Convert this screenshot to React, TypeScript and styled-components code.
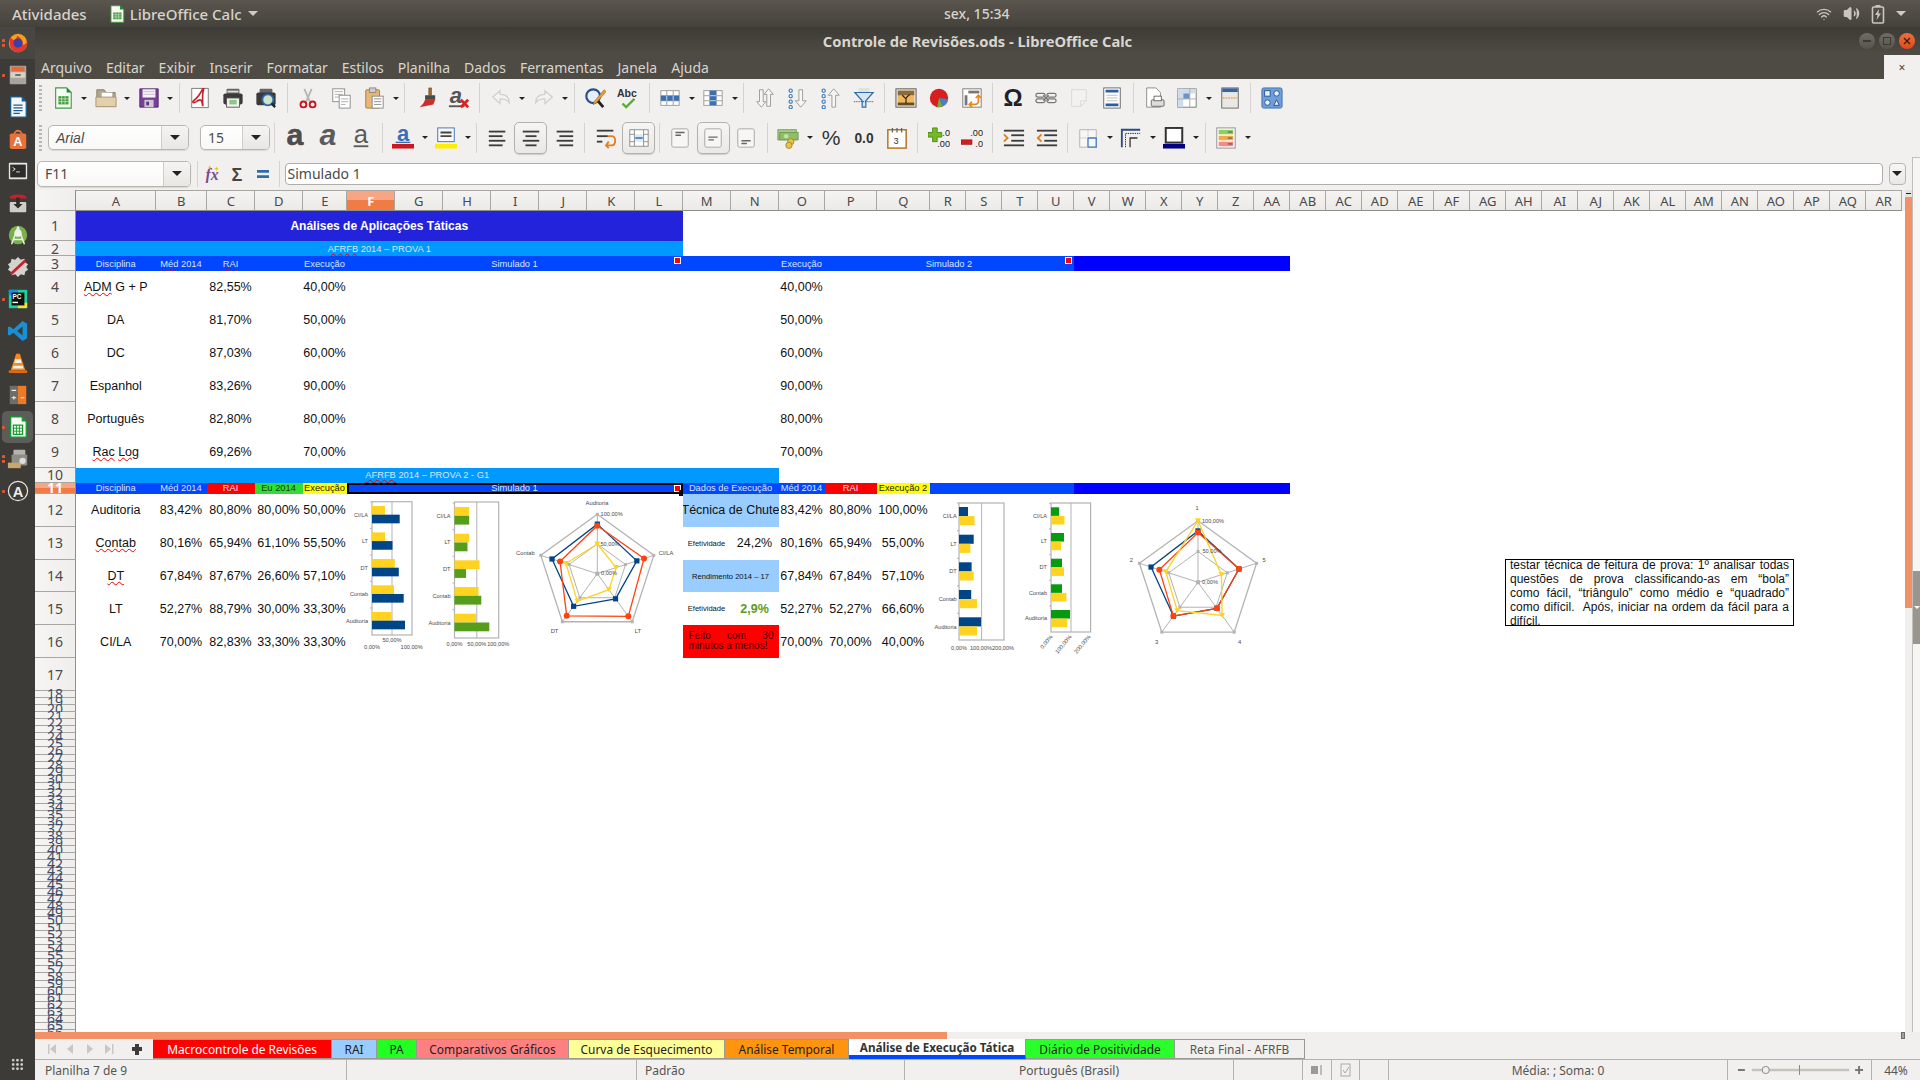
import * as React from "react";
import styled, { createGlobalStyle } from "styled-components";
import { Volume2, Wifi } from "lucide-react";

const GlobalStyle = createGlobalStyle`
    html, body { margin: 0; padding: 0; background: #fff; overflow: hidden; }
    * { box-sizing: border-box; }
`;

const UI_FONT = `"Noto Sans", "DejaVu Sans", sans-serif`;
const CELL_FONT = `"Liberation Sans", Arial, sans-serif`;

// ---- shell ----
const Screen = styled.div`
    width: 1920px;
    height: 1080px;
    display: flex;
    flex-direction: column;
    overflow: hidden;
    font-family: ${UI_FONT};
`;
const TopBar = styled.div`
    height: 27px;
    flex: none;
    display: grid;
    grid-template-columns: 944px auto 1fr;
    align-items: center;
    background: linear-gradient(#5a564e, #45423c);
    color: #d6d3cc;
    font-size: 14px;
    font-weight: 500;
`;
const TopLeft = styled.div`
    display: flex;
    align-items: center;
    padding-left: 12px;
    font-size: 15px;
`;
const TopApp = styled.div`
    display: flex;
    align-items: center;
    gap: 4px;
    margin-left: 21px;
`;
const Caret = styled.span<{ $size?: number; $color?: string }>`
    display: inline-block;
    width: 0;
    height: 0;
    border-left: ${p => p.$size ?? 5}px solid transparent;
    border-right: ${p => p.$size ?? 5}px solid transparent;
    border-top: ${p => p.$size ?? 5}px solid ${p => p.$color ?? "#cfccc5"};
`;
const TopCaret = styled(Caret)`
    margin-left: 2px;
`;
const TopTray = styled.div`
    display: flex;
    align-items: center;
    justify-content: flex-end;
    gap: 11px;
    padding-right: 14px;
    color: #c9c6bf;
`;
const Body = styled.div`
    flex: 1;
    display: flex;
    min-height: 0;
`;
const Launcher = styled.div`
    width: 35px;
    flex: none;
    display: flex;
    flex-direction: column;
    background: #3c3b37;
    position: relative;
`;
const LauncherItem = styled.div<{ $active?: boolean; $dots?: number }>`
    height: 32px;
    flex: none;
    display: flex;
    align-items: center;
    justify-content: center;
    position: relative;
    &:first-child { background: rgba(255,255,255,0.06); }
    &::before {
        content: "";
        position: absolute;
        left: 2px;
        right: 2px;
        top: 0;
        bottom: 0;
        border-radius: 5px;
        background: ${p => (p.$active ? "rgba(255,255,255,0.17)" : "transparent")};
    }
    &::after {
        content: "";
        position: absolute;
        left: 2px;
        top: ${p => (p.$dots === 2 ? 12 : 15)}px;
        width: 3px;
        height: ${p => (p.$dots === 2 ? 8 : 3)}px;
        display: ${p => (p.$dots ? "block" : "none")};
        background: ${p => (p.$dots === 2 ? "repeating-linear-gradient(#e2572b 0 3px, transparent 3px 5px)" : "#e2572b")};
        border-radius: 1px;
    }
    svg { position: relative; }
`;
const AppGrid = styled.div`
    position: absolute;
    left: 11px;
    bottom: 9px;
    width: 13px;
    height: 13px;
    background: radial-gradient(circle, #d8d6d0 1.1px, transparent 1.4px) 0 0 / 4.3px 4.3px;
`;
const Window = styled.div`
    flex: 1;
    min-width: 0;
    display: flex;
    flex-direction: column;
`;
const TitleBar = styled.div`
    height: 27px;
    flex: none;
    display: flex;
    align-items: center;
    justify-content: center;
    position: relative;
    background: linear-gradient(#3c3a35, #4f4c44);
    color: #d9d6cf;
    font-size: 14.7px;
    font-weight: 700;
`;
const WindowButtons = styled.div`
    position: absolute;
    right: 5px;
    top: 6px;
    display: flex;
    gap: 4px;
`;
const WindowButton = styled.div<{ $close?: boolean }>`
    width: 16px;
    height: 16px;
    border-radius: 50%;
    display: flex;
    align-items: center;
    justify-content: center;
    background: ${p => (p.$close ? "linear-gradient(#f0703c, #e0481a)" : "linear-gradient(#706d66, #56534c)")};
`;
const MenuBar = styled.div`
    height: 25px;
    flex: none;
    display: flex;
    align-items: center;
    gap: 14px;
    padding: 2px 0 0 6px;
    position: relative;
    background: #4e4b44;
    color: #d8d5cd;
    font-size: 14px;
`;
const DocClose = styled.div`
    position: absolute;
    right: 0;
    top: 1px;
    bottom: 0;
    width: 36px;
    background: #f1f0ee;
    color: #444;
    font-size: 12px;
    display: flex;
    align-items: center;
    justify-content: center;
`;

// ---- toolbars ----
const Toolbar = styled.div<{ $h: number }>`
    height: ${p => p.$h}px;
    flex: none;
    display: flex;
    align-items: center;
    position: relative;
    background: #f1f0ee;
    padding: 0 0 1px 2px;
`;
const Grip = styled.div`
    width: 3px;
    height: 26px;
    margin: 0 4px 0 2px;
    background: repeating-linear-gradient(#b8b6b1 0 2px, transparent 2px 4px);
    flex: none;
`;
const Tool = styled.div<{ $active?: boolean }>`
    width: 33px;
    height: 32px;
    flex: none;
    display: flex;
    align-items: center;
    justify-content: center;
    border-radius: 5px;
    border: 1px solid ${p => (p.$active ? "#b4b2ad" : "transparent")};
    background: ${p => (p.$active ? "linear-gradient(#f6f5f3, #e9e8e5)" : "transparent")};
    box-shadow: ${p => (p.$active ? "0 1px 1px rgba(0,0,0,0.15)" : "none")};
`;
const ToolArrow = styled.div`
    width: 10px;
    flex: none;
    display: flex;
    justify-content: center;
`;
const ToolSep = styled.div`
    width: 1px;
    height: 30px;
    margin: 0 3.875px;
    flex: none;
    background: #d5d3cf;
`;
const Combo = styled.div<{ $w: number; $ml: number; $h?: number }>`
    width: ${p => p.$w}px;
    height: ${p => p.$h ?? 25}px;
    margin-left: ${p => p.$ml}px;
    flex: none;
    display: flex;
    border: 1px solid #b8b6b1;
    border-radius: 5px;
    overflow: hidden;
    background: linear-gradient(#fff, #f8f8f7);
    box-shadow: 0 1px 1px rgba(0,0,0,0.1);
`;
const ComboText = styled.div<{ $italic?: boolean }>`
    flex: 1;
    display: flex;
    align-items: center;
    padding-left: 7px;
    color: #4c4c4c;
    font-family: ${p => (p.$italic ? CELL_FONT : UI_FONT)};
    font-style: ${p => (p.$italic ? "italic" : "normal")};
    font-size: 14px;
`;
const ComboDrop = styled.div`
    width: 27px;
    flex: none;
    display: flex;
    align-items: center;
    justify-content: center;
    border-left: 1px solid #cfcdc8;
    background: linear-gradient(#f5f4f2, #e8e7e4);
`;
const FormulaSep = styled.div<{ $ml: number }>`
    width: 1px;
    height: 26px;
    margin-left: ${p => p.$ml}px;
    flex: none;
    background: #d5d3cf;
`;
const FormulaTool = styled.div<{ $w: number }>`
    width: ${p => p.$w}px;
    flex: none;
    display: flex;
    justify-content: center;
`;
const FormulaInput = styled.div`
    width: 1598.5px;
    height: 22px;
    margin-left: 4.5px;
    flex: none;
    display: flex;
    align-items: center;
    padding-left: 2px;
    border: 1px solid #b0aeaa;
    border-radius: 4px;
    background: #fff;
    color: #4a4a4a;
    font-size: 14px;
`;
const FormulaDrop = styled.div`
    width: 17px;
    height: 22px;
    margin-left: 5.5px;
    flex: none;
    display: flex;
    align-items: center;
    justify-content: center;
    border: 1px solid #b8b6b1;
    border-radius: 4px;
    background: linear-gradient(#f7f6f5, #e9e8e5);
`;
const DeckCap = styled.div`
    position: absolute;
    right: 0;
    top: -1px;
    bottom: 0;
    width: 8px;
    border-left: 1px solid #c2c0bb;
    border-top: 1px solid #c2c0bb;
    background: #f7f6f5;
`;

// ---- sheet ----
const SheetRow = styled.div`
    height: 842px;
    flex: none;
    display: flex;
`;
const Sheet = styled.div`
    flex: 1;
    min-width: 0;
    position: relative;
    overflow: hidden;
    background: #fff;
`;
const VScroll = styled.div`
    width: 7px;
    flex: none;
    background: #f0efed;
`;
const VSplit = styled.div`
    height: 7px;
    display: flex;
    align-items: center;
    justify-content: center;
    background: #e4e3e0;
    &::after {
        content: "";
        width: 5px;
        height: 1px;
        background: #222;
    }
`;
const VThumb = styled.div`
    height: 411px;
    background: #f29068;
`;
const Deck = styled.div`
    width: 8px;
    flex: none;
    background: #f7f6f5;
    border-left: 1px solid #c2c0bb;
    padding-top: 381px;
`;
const DeckGrip = styled.div`
    height: 73px;
    background: #9a968f;
    display: flex;
    align-items: center;
    justify-content: center;
`;
const Grid = styled.div<{ $cols: string; $rows: string }>`
    display: grid;
    grid-template-columns: ${p => p.$cols};
    grid-template-rows: ${p => p.$rows};
    width: 100%;
    height: 100%;
    font-family: ${CELL_FONT};
    color: #111;
`;
const ColHead = styled.div<{ $col: number; $sel?: boolean }>`
    grid-column: ${p => p.$col};
    grid-row: 1;
    display: flex;
    align-items: center;
    justify-content: center;
    padding-left: 1.5px;
    font-family: ${UI_FONT};
    font-size: 13px;
    font-weight: ${p => (p.$sel ? 700 : 400)};
    color: ${p => (p.$sel ? "#fff" : "#4a4a4a")};
    background: ${p => (p.$sel
        ? "linear-gradient(#f6a684 0 50%, #f07b45 50%)"
        : "linear-gradient(#f5f4f2, #ebeae7)")};
    border-top: 1px solid #a8a6a1;
    border-right: 1px solid #a8a6a1;
    border-bottom: 1px solid #8f8d88;
    overflow: hidden;
`;
const RowHead = styled.div<{ $row: number; $sel?: boolean; $tight?: boolean }>`
    grid-column: 1;
    grid-row: ${p => p.$row};
    display: flex;
    align-items: center;
    justify-content: center;
    position: relative;
    font-family: ${UI_FONT};
    font-size: 14px;
    font-weight: ${p => (p.$sel ? 700 : 400)};
    color: ${p => (p.$sel ? "#fff" : p.$tight ? "#3d4f6a" : "#4a4a4a")};
    line-height: ${p => (p.$tight ? "7px" : "normal")};
    background: ${p => (p.$sel
        ? "linear-gradient(#f6a684 0 50%, #f07b45 50%)"
        : "linear-gradient(90deg, #f6f5f3, #efeeec)")};
    border-right: 1px solid #8f8d88;
    border-bottom: 1px solid #a8a6a1;
`;
const Cell = styled.div<{
    $c: number; $span?: number; $r: number; $bg?: string; $fg?: string;
    $size?: number; $bold?: boolean; $noClip?: boolean;
}>`
    grid-column: ${p => p.$c} / span ${p => p.$span ?? 1};
    grid-row: ${p => p.$r};
    display: flex;
    align-items: center;
    justify-content: center;
    position: relative;
    white-space: nowrap;
    overflow: ${p => (p.$noClip ? "visible" : "hidden")};
    background: ${p => p.$bg ?? "transparent"};
    color: ${p => p.$fg ?? "#111"};
    font-size: ${p => p.$size ?? 12.5}px;
    font-weight: ${p => (p.$bold ? 700 : 400)};
`;
const SelectedBand = styled(Cell)`
    border: 2px solid #000;
    &::after {
        content: "";
        position: absolute;
        right: -4px;
        bottom: -4px;
        width: 6px;
        height: 6px;
        background: #000;
    }
`;
const NoteCell = styled(Cell)`
    white-space: normal;
    text-align: justify;
    text-align-last: left;
    display: block;
    padding: 6px 5px 0 6px;
    line-height: 10px;
    font-size: 10px;
`;
const FillHeader = styled.div`
    grid-column: -2;
    grid-row: 1;
    background: #f0efed;
`;
const Spell = styled.span`
    text-decoration: underline wavy #ee0000 1px;
    text-underline-offset: 1px;
`;
const Mark = styled.span<{ $inset?: number; $top?: number }>`
    position: absolute;
    right: ${p => p.$inset ?? 1.5}px;
    top: ${p => p.$top ?? 1}px;
    width: 7px;
    height: 7px;
    background: #f00;
    border: 1px solid #fff;
`;
const TextNote = styled.div`
    position: absolute;
    left: 1470px;
    top: 369px;
    width: 289px;
    height: 66.5px;
    border: 1.5px solid #000;
    overflow: hidden;
    padding: 0 4px;
    background: #fff;
    font-family: ${CELL_FONT};
    font-size: 12px;
    line-height: 14px;
    color: #111;
`;
const TextNoteBody = styled.div`
    margin-top: -2px;
`;
const NoteLine = styled.div<{ $last?: boolean }>`
    text-align: justify;
    text-align-last: ${p => (p.$last ? "left" : "justify")};
`;
const FloatChart = styled.svg<{ $x: number; $y: number }>`
    position: absolute;
    left: ${p => p.$x - 35}px;
    top: ${p => p.$y - 190}px;
    font-family: ${CELL_FONT};
`;

// ---- bottom ----
const HScroll = styled.div`
    height: 7px;
    flex: none;
    background: #f0efed;
    display: flex;
`;
const HThumb = styled.div`
    width: 912px;
    background: #f29068;
`;
const HGrip = styled.div`
    width: 4px;
    margin: 0 15px 0 auto;
    background: #a3a19c;
    border: 1px solid #6f6d68;
`;
const TabBar = styled.div`
    height: 21px;
    flex: none;
    display: flex;
    align-items: stretch;
    background: #f1f0ee;
    border-bottom: 1px solid #b5b3ae;
`;
const TabNav = styled.div`
    width: 118px;
    flex: none;
    display: flex;
    align-items: center;
`;
const Tab = styled.div<{ $w: number; $bg: string; $fg: string; $active?: boolean }>`
    width: ${p => p.$w}px;
    flex: none;
    display: flex;
    align-items: center;
    justify-content: center;
    padding-bottom: 1px;
    white-space: nowrap;
    font-size: ${p => (p.$active ? 11.7 : 11.9)}px;
    font-weight: ${p => (p.$active ? 700 : 400)};
    background: ${p => p.$bg};
    color: ${p => p.$fg};
    border: 1px solid #9a9893;
    border-left: none;
    border-top-width: ${p => (p.$active ? 0 : 1)}px;
    border-bottom: ${p => (p.$active ? "4px solid #0047ff" : "1px solid #9a9893")};
`;
const StatusBar = styled.div`
    height: 20px;
    flex: none;
    display: grid;
    grid-template-columns: 312px 290px 268px 329px 69px 29px 28px 29px 339px 144px 1fr;
    background: #f1f0ee;
    color: #555;
    font-size: 12px;
`;
const StatusCell = styled.div<{ $center?: boolean; $pad?: number }>`
    display: flex;
    align-items: center;
    justify-content: ${p => (p.$center ? "center" : "flex-start")};
    padding-left: ${p => (p.$center ? 0 : p.$pad ?? 8)}px;
    border-right: 1px solid #b5b3ae;
    white-space: nowrap;
    overflow: hidden;
    &:last-child { border-right: none; }
`;

// ---- small drawings ----
const Ic: React.FC<{ s?: number; children: React.ReactNode }> = ({ s = 24, children }) => (
    <svg width={s} height={s} viewBox="0 0 24 24">{children}</svg>
);

const bars = (x: number, ys: number[], w: number, c = "#3c3c3c", h = 2) =>
    ys.map((y, i) => <rect key={i} x={x} y={y} width={i % 2 ? w - 3 : w} height={h} fill={c} />);

const table = (
    <g>
        <rect x="2" y="4" width="20" height="16" fill="#fff" stroke="#999" />
        <path d="M2 9.5h20M2 15h20M8.5 4v16M15.5 4v16" stroke="#999" />
    </g>
);

const icons: Record<string, React.ReactNode> = {
    newDoc: <g>
        <path d="M4 1h12l5 5v17H4z" fill="#f7fbf4" stroke="#3f9a3f" strokeWidth="1.2" />
        <path d="M16 1l5 5h-5z" fill="#168a2e" />
        <rect x="7" y="10" width="11" height="9" fill="#3c9c3c" />
        <path d="M7 13h11M7 16h11M10.6 10v9M14.3 10v9" stroke="#d8f0d0" strokeWidth=".8" />
    </g>,
    open: <g>
        <path d="M2 3h8l2 3h10v15H2z" fill="#b5a688" stroke="#8a7c62" />
        <rect x="7" y="6" width="12" height="7" fill="#fff" stroke="#aaa" strokeWidth=".6" />
        <path d="M1 11h22v10.5H1z" fill="#e2d0ad" stroke="#a8946f" />
    </g>,
    save: <g>
        <path d="M2 2h20v20H2z" fill="#7a3f97" stroke="#50236a" />
        <rect x="5" y="2.5" width="14" height="9" fill="#f5f3f7" />
        <path d="M6 5h12M6 8h12" stroke="#c8b9d1" />
        <rect x="7" y="14" width="10" height="8" fill="#cfc6d6" />
        <rect x="9" y="16" width="3" height="4" fill="#5c3a72" />
    </g>,
    pdf: <g>
        <rect x="3" y="1.5" width="18" height="21" fill="#fff" stroke="#777" />
        <path d="M15 2C12 8 9 12 5 15c-2 2 0 3 3 1 5-4 6-2 7 5 0-6-1-12 1-19z" fill="none" stroke="#c8202a" strokeWidth="1.8" />
    </g>,
    print: <g>
        <rect x="5" y="2" width="14" height="7" rx="1" fill="#666" />
        <rect x="1.5" y="7" width="21" height="12" rx="2" fill="#3a3a3a" />
        <rect x="5" y="12" width="14" height="10" fill="#f4f4f2" stroke="#555" />
        <rect x="8" y="14" width="8" height="5" fill="#8cc48a" />
        <rect x="6" y="4" width="12" height="2" fill="#ddd" />
    </g>,
    preview: <g>
        <rect x="5" y="2" width="14" height="7" rx="1" fill="#666" />
        <rect x="1.5" y="6" width="21" height="14" rx="2" fill="#3a3a3a" />
        <circle cx="14" cy="14" r="6" fill="#cfe2d0" stroke="#2d6aa8" strokeWidth="2" />
        <path d="M18 18l4 4" stroke="#222" strokeWidth="2.5" />
    </g>,
    cut: <g>
        <path d="M8 2l6 14M16 2l-6 14" stroke="#b8b6b1" strokeWidth="2" />
        <circle cx="7" cy="19" r="3.2" fill="none" stroke="#c8141e" strokeWidth="2" />
        <circle cx="17" cy="19" r="3.2" fill="none" stroke="#c8141e" strokeWidth="2" />
    </g>,
    copy: <g>
        <rect x="3" y="2" width="13" height="14" fill="#fff" stroke="#8a8a8a" />
        <path d="M5 5h9M5 8h9M5 11h6" stroke="#aaa" />
        <rect x="10" y="9" width="12" height="14" fill="#fff" stroke="#8a8a8a" />
        <path d="M12 13h8M12 16h8M12 19h5" stroke="#aaa" />
    </g>,
    paste: <g>
        <rect x="3" y="3" width="15" height="20" rx="1" fill="#e8b775" stroke="#a77a3a" />
        <rect x="7" y="1" width="7" height="5" fill="#ccc" stroke="#888" />
        <rect x="10" y="10" width="12" height="13" fill="#fff" stroke="#888" />
        <path d="M12 13h8M12 16h8M12 19h8" stroke="#888" />
    </g>,
    brush: <g>
        <path d="M15 1h3v8h-3z" fill="#9d6b2f" stroke="#6e4a1e" strokeWidth=".6" />
        <path d="M11 9h11v5H11z" fill="#4a4a4a" />
        <path d="M11 14h11l-2 5-15 3c3-2 5-5 6-8z" fill="#cf2c2c" />
    </g>,
    clear: <g>
        <text x="2" y="17" fontSize="24" fontStyle="italic" fontWeight="700" fontFamily="Liberation Sans" fill="#555">a</text>
        <rect x="1" y="20" width="17" height="2" fill="#555" />
        <path d="M14 14l8 8M22 14l-8 8" stroke="#dd2222" strokeWidth="3" />
    </g>,
    undo: <path d="M3 11l8-7v4c6 0 10 3 10 9-2-3-5-4-10-4v5z" fill="#f4f3f1" stroke="#d2d0cc" strokeWidth="1.4" />,
    redo: <path d="M21 11l-8-7v4c-6 0-10 3-10 9 2-3 5-4 10-4v5z" fill="#f4f3f1" stroke="#d2d0cc" strokeWidth="1.4" />,
    find: <g>
        <circle cx="10" cy="10" r="7.5" fill="#e8eef7" stroke="#274f8e" strokeWidth="2.4" />
        <path d="M15 15l6 7" stroke="#222" strokeWidth="3" />
        <path d="M22 3L11 16l-1 3 3-1L24 5z" fill="#e89b3c" stroke="#8a5a1e" strokeWidth=".6" />
    </g>,
    spell: <g>
        <text x="0" y="11" fontSize="11.5" fontWeight="700" fontFamily="Liberation Sans" fill="#333">Abc</text>
        <path d="M6 18l4 4 9-9" fill="none" stroke="#58b030" strokeWidth="2.6" />
    </g>,
    rows: <g>
        {table}
        <rect x="2" y="9.5" width="20" height="5.5" fill="#3d6fb0" />
        <path d="M8.5 9.5v5.5M15.5 9.5v5.5" stroke="#cfe0f5" />
    </g>,
    cols: <g>
        {table}
        <rect x="8.5" y="4" width="7" height="16" fill="#3d6fb0" />
        <path d="M8.5 9.5h7M8.5 15h7" stroke="#cfe0f5" />
    </g>,
    sort: <g fill="#f7f6f4" stroke="#9a9893">
        <path d="M8 22l-5-6h3V3h4v13h3z" />
        <path d="M16 2l5 6h-3v13h-4V8h-3z" />
    </g>,
    sortAsc: <g>
        <g fill="none" stroke="#3b78b8" strokeWidth="1.2"><circle cx="4" cy="4" r="1.8" /><circle cx="4" cy="10" r="1.8" /><circle cx="4" cy="16" r="1.8" /><circle cx="4" cy="22" r="1.8" /></g>
        <path d="M15 22l-6-7h4V3h4v12h4z" fill="#f7f6f4" stroke="#9a9893" />
    </g>,
    sortDesc: <g>
        <g fill="none" stroke="#3b78b8" strokeWidth="1.2"><circle cx="4" cy="4" r="1.8" /><circle cx="4" cy="10" r="1.8" /><circle cx="4" cy="16" r="1.8" /><circle cx="4" cy="22" r="1.8" /></g>
        <path d="M15 2l6 7h-4v13h-4V9H9z" fill="#f7f6f4" stroke="#9a9893" />
    </g>,
    filter: <g>
        <path d="M6 1h12v5H6z" fill="#d8d8d4" opacity=".6" />
        <path d="M2 6h20l-8 9v7h-4v-7z" fill="#d6e6f5" stroke="#2f6ca8" strokeWidth="1.3" />
        <path d="M1 16h22" stroke="#333" strokeDasharray="1 1" />
    </g>,
    image: <g>
        <rect x="1" y="2" width="22" height="20" fill="#e4e3e0" stroke="#555" />
        <rect x="3" y="4" width="18" height="16" fill="#f0b860" />
        <rect x="3" y="4" width="18" height="5" fill="#8a6a40" />
        <rect x="3" y="17" width="18" height="3" fill="#6a4a24" />
        <path d="M12 18v-6M12 13l-4-4M12 12l4-4" stroke="#2a1a10" strokeWidth="1.2" />
    </g>,
    chart: <g>
        <circle cx="12" cy="12" r="10" fill="#d81e1e" />
        <path d="M12 12L22 13a10 10 0 0 1-6 8z" fill="#4a7fc0" />
        <path d="M12 12l4 9a10 10 0 0 1-6 1z" fill="#6fb040" />
    </g>,
    pivot: <g>
        <rect x="2" y="2" width="20" height="20" fill="#fff" stroke="#777" />
        <rect x="8" y="4" width="12" height="3" fill="#777" />
        <rect x="4" y="9" width="3" height="11" fill="#777" />
        <path d="M10 19h5q4 0 4-4v-5M16 12l3-3 3 3M12 16l-3 3 3 3" fill="none" stroke="#e08a20" strokeWidth="1.8" />
    </g>,
    omega: <text x="12" y="21" textAnchor="middle" fontSize="26" fontWeight="700" fontFamily="Liberation Sans" fill="#222">Ω</text>,
    link: <g fill="none" stroke="#777" strokeWidth="1.4">
        <rect x="1" y="7" width="10" height="4" rx="2" /><rect x="13" y="13" width="10" height="4" rx="2" />
        <rect x="13" y="7" width="10" height="4" rx="2" /><rect x="1" y="13" width="10" height="4" rx="2" />
        <path d="M9 9l6 6M15 9l-6 6" />
    </g>,
    note: <path d="M4 3h16v12l-6 6H4zM14 21v-6h6" fill="#f3f2f0" stroke="#dad8d4" />,
    header: <g>
        <rect x="3" y="1" width="18" height="22" fill="#fff" stroke="#666" />
        <rect x="5" y="3" width="14" height="3" fill="#2a5ca0" />
        <path d="M6 9h12M6 12h12M6 15h12" stroke="#bbb" />
        <rect x="5" y="18" width="14" height="3" fill="#2a5ca0" />
    </g>,
    printArea: <g>
        <path d="M4 1h10l5 5v16H4z" fill="#fff" stroke="#888" />
        <rect x="9" y="14" width="14" height="7" rx="1" fill="#ddd" stroke="#666" />
        <rect x="12" y="10" width="8" height="5" fill="#fff" stroke="#666" />
    </g>,
    freeze: <g>
        <rect x="2" y="2" width="20" height="20" fill="#fff" stroke="#777" />
        <rect x="2" y="2" width="20" height="5" fill="#cfdcec" />
        <rect x="2" y="2" width="6" height="20" fill="#cfdcec" />
        <rect x="8" y="7" width="7" height="6" fill="#6a96c8" />
        <path d="M15 2v20M2 13h20" stroke="#aaa" />
    </g>,
    split: <g>
        <rect x="3" y="1" width="18" height="22" fill="#e8e8e6" stroke="#666" />
        <rect x="3.5" y="1.5" width="17" height="4" fill="#3a64a0" />
        <path d="M4 12h16" stroke="#e88a10" strokeDasharray="2 1" strokeWidth="1.2" />
    </g>,
    shapes: <g>
        <rect x="1" y="1" width="22" height="22" rx="2" fill="#6f9ed8" stroke="#3d6fb0" />
        <rect x="4" y="4" width="6" height="6" fill="#e8f0fa" stroke="#23508c" />
        <circle cx="17" cy="7" r="3" fill="#e8f0fa" stroke="#23508c" />
        <circle cx="7" cy="17" r="3" fill="#e8f0fa" stroke="#23508c" />
        <path d="M14 20l3-6 3 6z" fill="#e8f0fa" stroke="#23508c" />
    </g>,
    bold: <text x="12" y="20" textAnchor="middle" fontSize="33" fontWeight="700" fontFamily="Liberation Sans" fill="#4d4d4d" stroke="#4d4d4d" strokeWidth=".6">a</text>,
    italic: <text x="12" y="20" textAnchor="middle" fontSize="33" fontStyle="italic" fontWeight="700" fontFamily="Liberation Sans" fill="#5a5a5a">a</text>,
    underline: <g>
        <text x="12" y="17" textAnchor="middle" fontSize="28" fontFamily="Liberation Sans" fill="#5a5a5a">a</text>
        <rect x="4" y="20" width="16" height="2" fill="#5a5a5a" />
    </g>,
    fontColor: <g>
        <text x="12" y="15" textAnchor="middle" fontSize="24" fontWeight="700" fontFamily="Liberation Sans" fill="#3a6fb5">a</text>
        <rect x="4" y="16" width="16" height="1.5" fill="#3a6fb5" />
        <rect x="0" y="18.5" width="24" height="5" fill="#c9191c" />
    </g>,
    highlight: <g>
        <rect x="3" y="1" width="18" height="15" fill="#f8f8f8" stroke="#3a6fb5" />
        <path d="M6 6h12M6 10h12" stroke="#444" strokeWidth="2" />
        <rect x="0" y="18.5" width="24" height="5" fill="#ffee00" />
    </g>,
    alignLeft: <g>{bars(2, [4, 9, 14, 19], 18)}</g>,
    alignCenter: <g>
        <rect x="3" y="4" width="18" height="2" fill="#3c3c3c" /><rect x="6" y="9" width="12" height="2" fill="#3c3c3c" />
        <rect x="3" y="14" width="18" height="2" fill="#3c3c3c" /><rect x="6" y="19" width="12" height="2" fill="#3c3c3c" />
    </g>,
    alignRight: <g>
        <rect x="4" y="4" width="18" height="2" fill="#3c3c3c" /><rect x="7" y="9" width="15" height="2" fill="#3c3c3c" />
        <rect x="4" y="14" width="18" height="2" fill="#3c3c3c" /><rect x="7" y="19" width="15" height="2" fill="#3c3c3c" />
    </g>,
    wrap: <g>
        <rect x="2" y="3" width="18" height="2" fill="#3c3c3c" /><rect x="2" y="9" width="12" height="2" fill="#3c3c3c" />
        <rect x="2" y="15" width="6" height="2" fill="#3c3c3c" />
        <path d="M14 10h4q4 0 4 5t-4 5h-5M15 16l-3 4 3 3" fill="none" stroke="#e08020" strokeWidth="2" />
    </g>,
    merge: <g>
        <rect x="2" y="3" width="20" height="18" fill="#fff" stroke="#8a8a8a" />
        <rect x="7" y="8" width="10" height="8" fill="#dbe8f6" />
        <path d="M2 8h5M17 8h5M2 16h5M17 16h5M7 3v18M17 3v18" stroke="#8a8a8a" />
        <path d="M8 12h8" stroke="#2f6ca8" strokeWidth="1.6" />
    </g>,
    vTop: <g>
        <rect x="3" y="2" width="18" height="20" rx="2" fill="#f7f6f4" stroke="#a5a39e" />
        <path d="M7 6h10M7 9h6" stroke="#666" strokeWidth="1.4" />
    </g>,
    vMid: <g>
        <rect x="3" y="2" width="18" height="20" rx="2" fill="#f7f6f4" stroke="#a5a39e" />
        <path d="M7 11h10M7 14h6" stroke="#666" strokeWidth="1.4" />
    </g>,
    vBot: <g>
        <rect x="3" y="2" width="18" height="20" rx="2" fill="#f7f6f4" stroke="#a5a39e" />
        <path d="M7 15h10M7 18h6" stroke="#666" strokeWidth="1.4" />
    </g>,
    money: <g>
        <rect x="1" y="3" width="20" height="11" fill="#a6cf82" stroke="#6f9a50" />
        <rect x="3" y="6" width="20" height="8" fill="#8fbd6b" stroke="#6f9a50" />
        <circle cx="10" cy="10" r="2.5" fill="#c2e0a8" />
        <circle cx="15" cy="16" r="3.4" fill="#e6c24a" stroke="#a88a20" />
        <circle cx="13" cy="20" r="3.4" fill="#e6c24a" stroke="#a88a20" />
    </g>,
    percent: <text x="12" y="20" textAnchor="middle" fontSize="23" fontFamily="Liberation Sans" fill="#333">%</text>,
    number: <text x="12" y="17" textAnchor="middle" fontSize="15" fontWeight="700" fontFamily="Liberation Sans" fill="#333">0.0</text>,
    date: <g>
        <rect x="2" y="3" width="20" height="20" fill="#fff" stroke="#b5731f" strokeWidth="1.6" />
        <path d="M7 1v5M12 1v5M17 1v5" stroke="#666" strokeWidth="1.4" />
        <text x="11" y="18" textAnchor="middle" fontSize="10" fontFamily="Liberation Sans" fill="#333">3</text>
    </g>,
    addDec: <g>
        <path d="M5 1h5v5h5v5h-5v5H5v-5H0V6h5z" fill="#74b82c" stroke="#4c8a12" />
        <text x="24" y="10" textAnchor="end" fontSize="10" fontFamily="Liberation Sans" fill="#222">.0</text>
        <text x="24" y="22" textAnchor="end" fontSize="10" fontFamily="Liberation Sans" fill="#222">.00</text>
    </g>,
    delDec: <g>
        <rect x="0" y="14" width="12" height="5" fill="#d02020" stroke="#901010" strokeWidth=".6" />
        <text x="24" y="10" textAnchor="end" fontSize="10" fontFamily="Liberation Sans" fill="#222">.00</text>
        <text x="24" y="22" textAnchor="end" fontSize="10" fontFamily="Liberation Sans" fill="#222">.0</text>
    </g>,
    indent: <g>
        <rect x="1" y="3" width="22" height="2" fill="#3c3c3c" /><rect x="9" y="8" width="14" height="2" fill="#3c3c3c" />
        <rect x="9" y="14" width="14" height="2" fill="#3c3c3c" /><rect x="1" y="19" width="22" height="2" fill="#3c3c3c" />
        <path d="M1 8l4 4-4 4" fill="none" stroke="#e08020" strokeWidth="2" />
    </g>,
    outdent: <g>
        <rect x="1" y="3" width="22" height="2" fill="#3c3c3c" /><rect x="9" y="8" width="14" height="2" fill="#3c3c3c" />
        <rect x="9" y="14" width="14" height="2" fill="#3c3c3c" /><rect x="1" y="19" width="22" height="2" fill="#3c3c3c" />
        <path d="M6 8l-4 4 4 4" fill="none" stroke="#e08020" strokeWidth="2" />
    </g>,
    borders: <g>
        <rect x="3" y="3" width="18" height="19" fill="#f7f7f6" stroke="#b5b3ae" />
        <path d="M12 3v19M3 12h18" stroke="#aaa" strokeDasharray="1 1" />
        <path d="M12 12v10M12 12h9v10H12" fill="none" stroke="#4a7fc0" strokeWidth="1.4" />
    </g>,
    borderStyle: <g>
        <path d="M2 22V3h20" fill="none" stroke="#2a4a80" strokeWidth="2" />
        <path d="M6 22V7h16" fill="none" stroke="#222" strokeDasharray="1.5 1" />
        <path d="M11 22V12h8" fill="none" stroke="#333" strokeWidth="1.4" />
    </g>,
    borderColor: <g>
        <rect x="3" y="1" width="18" height="16" fill="#fff" stroke="#333" strokeWidth="2.2" />
        <rect x="0" y="18.5" width="24" height="5" fill="#000080" />
    </g>,
    conditional: <g>
        <rect x="2" y="1" width="20" height="22" fill="#fff" stroke="#8a8a8a" />
        <rect x="4" y="3" width="16" height="5" fill="#8fd05a" />
        <rect x="4" y="9.5" width="16" height="5" fill="#f7a845" />
        <rect x="4" y="16" width="16" height="5" fill="#f58a8a" />
        <path d="M14 5.5h5M14 12h5M14 18.5h5" stroke="#444" />
    </g>,
};

type Item = { k: "t"; i: string; a?: boolean; on?: boolean; s?: number } | { k: "s" };
const t = (i: string, a = false, on = false, s = 22): Item => ({ k: "t", i, a, on, s });
const sep: Item = { k: "s" };

const toolbarOne: Item[] = [
    t("newDoc", true), t("open", true), t("save", true), sep,
    t("pdf"), t("print"), t("preview"), sep,
    t("cut"), t("copy"), t("paste", true), sep,
    t("brush"), t("clear"), sep,
    t("undo", true), t("redo", true), sep,
    t("find"), t("spell"), sep,
    t("rows", true), t("cols", true), sep,
    t("sort"), t("sortAsc"), t("sortDesc"), t("filter"), sep,
    t("image"), t("chart"), t("pivot"), sep,
    t("omega"), t("link"), t("note"), t("header"), sep,
    t("printArea"), t("freeze", true), t("split"), sep,
    t("shapes"),
];
const toolbarTwo: Item[] = [
    sep,
    t("bold"), t("italic"), t("underline"), sep,
    t("fontColor", true), t("highlight", true), sep,
    t("alignLeft"), t("alignCenter", false, true), t("alignRight"), sep,
    t("wrap"), t("merge", false, true), sep,
    t("vTop"), t("vMid", false, true), t("vBot"), sep,
    t("money", true), t("percent"), t("number"), t("date"), sep,
    t("addDec"), t("delDec"), sep,
    t("indent"), t("outdent"), sep,
    t("borders", true), t("borderStyle", true), t("borderColor", true), sep,
    t("conditional", true),
];

const ToolItems: React.FC<{ items: Item[] }> = ({ items }) => <>
    {items.map((it, n) => it.k === "s" ? <ToolSep key={n} /> : <React.Fragment key={n}>
        <Tool $active={it.on}><Ic s={it.s}>{icons[it.i]}</Ic></Tool>
        {it.a ? <ToolArrow><Caret $size={3} $color="#222" /></ToolArrow> : null}
    </React.Fragment>)}
</>;

const launcherIcons: { d?: number; on?: boolean; icon: React.ReactNode }[] = [
    { d: 2, icon: <g>
        <circle cx="12" cy="12" r="10" fill="#f7a01c" />
        <path d="M4 6c-3 6 0 16 8 16s11-7 10-12c-1 3-3 4-5 4 1-4-2-8-6-10 0 3-2 4-4 5-1-1-2-2-3-3z" fill="#e6382a" />
        <circle cx="12" cy="12" r="5" fill="#3b3fa8" />
    </g> },
    { d: 1, icon: <g>
        <rect x="3" y="2" width="18" height="20" rx="1" fill="#a8a49b" />
        <rect x="5" y="3" width="14" height="5" fill="#e8683a" />
        <rect x="4" y="9" width="16" height="6" fill="#d5d2cb" />
        <rect x="9" y="11" width="6" height="2" fill="#666" />
    </g> },
    { icon: <g>
        <path d="M4 1h12l5 5v17H4z" fill="#f4f8fc" stroke="#1c5c8e" strokeWidth="1.4" />
        <path d="M16 1l5 5h-5z" fill="#1c5c8e" />
        <path d="M7 10h10M7 13h10M7 16h10M7 19h7" stroke="#1c5c8e" strokeWidth="1.5" />
    </g> },
    { icon: <g>
        <path d="M8 7a4 4 0 0 1 8 0" fill="none" stroke="#e8703a" strokeWidth="2" />
        <rect x="3" y="6" width="18" height="17" rx="2" fill="#e8703a" />
        <text x="12" y="20" textAnchor="middle" fontSize="14" fontWeight="700" fontFamily="Liberation Sans" fill="#fff">A</text>
    </g> },
    { icon: <g>
        <rect x="2" y="3" width="20" height="18" rx="1" fill="#e8e6e0" />
        <rect x="3.5" y="5" width="17" height="14" fill="#2c2c2a" />
        <path d="M6 8l3 2-3 2M10 13h4" stroke="#eee" strokeWidth="1" fill="none" />
    </g> },
    { icon: <g>
        <rect x="3" y="11" width="18" height="11" rx="1" fill="#cfcdc7" />
        <path d="M3 5c3-3 15-3 18 0v2H3z" fill="#c8202a" />
        <path d="M10 6h4v7h3l-5 5-5-5h3z" fill="#2c2c2a" />
    </g> },
    { icon: <g>
        <circle cx="12" cy="12" r="10" fill="#79b04a" />
        <circle cx="12" cy="10" r="4" fill="#eef4e6" />
        <path d="M12 3L5 22M12 3l7 19M7 17h10" stroke="#eee" strokeWidth="1.6" fill="none" />
    </g> },
    { icon: <g>
        <path d="M12 1l3 3 4-1 1 4 3 2-2 3 2 3-3 2-1 4-4-1-3 3-3-3-4 1-1-4-3-2 2-3-2-3 3-2 1-4 4 1z" fill="#d5d3cd" />
        <path d="M4 20L20 5" stroke="#c8202a" strokeWidth="3" />
    </g> },
    { d: 1, icon: <g>
        <path d="M2 2h20v20H2z" fill="#1fd0a0" />
        <path d="M2 2h10v6H2z" fill="#1d8fd8" />
        <path d="M22 22h-10v-6h10z" fill="#f0e040" />
        <rect x="5" y="5" width="14" height="14" fill="#111" />
        <text x="6" y="12" fontSize="7" fontWeight="700" fontFamily="Liberation Sans" fill="#fff">PC</text>
        <rect x="6" y="15" width="6" height="1.5" fill="#fff" />
    </g> },
    { icon: <path d="M17 1l5 3v16l-5 3L7 14l-4 3-2-1V8l2-1 4 3zM17 7l-6 5 6 5z" fill="#1b8fd6" fillRule="evenodd" /> },
    { icon: <g>
        <path d="M10 2h4l6 18H4z" fill="#f28a1e" />
        <path d="M9 8h6l1 4H8zM7 15h10l1 3H6z" fill="#f4f2ee" />
        <rect x="2" y="20" width="20" height="3" rx="1" fill="#e06a10" />
    </g> },
    { icon: <g>
        <rect x="3" y="2" width="9" height="20" fill="#6f6d68" />
        <rect x="12" y="2" width="9" height="20" fill="#ef7a26" />
        <path d="M5 7h5M5 15h5M7.5 13v4M15 15h4" stroke="#eee" strokeWidth="1.2" />
    </g> },
    { d: 1, on: true, icon: <g>
        <path d="M4 1h12l5 5v17H4z" fill="#f7fbf4" stroke="#159a32" strokeWidth="1.4" />
        <path d="M16 1l5 5h-5z" fill="#159a32" />
        <rect x="7" y="10" width="10" height="10" fill="none" stroke="#159a32" strokeWidth="1.4" />
        <path d="M7 13.3h10M7 16.6h10M10.3 10v10M13.6 10v10" stroke="#159a32" />
    </g> },
    { d: 2, icon: <g>
        <rect x="7" y="2" width="13" height="6" rx="1" fill="#b5b3ad" />
        <rect x="5" y="7" width="17" height="12" rx="1" fill="#8f8d87" />
        <path d="M1 16h14v6H1z" fill="#c9a66b" />
        <circle cx="17" cy="14" r="3.5" fill="#ddd" />
    </g> },
    { d: 1, icon: <g>
        <circle cx="12" cy="12" r="10.5" fill="#3c3b37" stroke="#e8e6e0" strokeWidth="1.3" />
        <text x="12" y="18" textAnchor="middle" fontSize="16" fontWeight="700" fontFamily="Liberation Sans" fill="#f0eee8">A</text>
    </g> },
];

// ---- sheet data ----
const baseCols = ["A", "B", "C", "D", "E", "F", "G", "H", "I", "J", "K", "L", "M", "N", "O", "P", "Q"];
const baseWidths = [79.5, 51, 48, 48, 44, 48, 48, 48.5, 48, 48, 48, 47.5, 48, 48, 46, 52, 53];
const extra = "R S T U V W X Y Z AA AB AC AD AE AF AG AH AI AJ AK AL AM AN AO AP AQ AR".split(" ");
const letters = [...baseCols, ...extra];
const widths = [...baseWidths, ...extra.map(() => 36)];
const col = (l: string) => letters.indexOf(l) + 2;
const between = (a: string, b: string) => col(b) - col(a) + 1;

const rowHeights: number[] = [
    30, 15, 15,
    32.83, 32.83, 32.83, 32.83, 32.83, 32.83,
    15, 11,
    32.83, 32.83, 32.83, 32.83, 32.83, 32.83,
    ...Array.from({ length: 49 }, () => 7.07),
];
const gridCols = `41px ${widths.map(w => `${w}px`).join(" ")} 1fr`;
const gridRows = `21px ${rowHeights.map(h => `${h}px`).join(" ")}`;
// sheet row -> grid row (row 1 of the grid holds the column letters)
const gr = (r: number) => r + 1;

const BLUE = "#0047ff";
const SKY = "#0099ff";
const PALE = "#dbe6ff";
const LIGHT = "#99ccff";

const prova1: [React.ReactNode, string, string][] = [
    [<span><Spell>ADM</Spell> G + P</span>, "82,55%", "40,00%"],
    ["DA", "81,70%", "50,00%"],
    ["DC", "87,03%", "60,00%"],
    ["Espanhol", "83,26%", "90,00%"],
    ["Português", "82,80%", "80,00%"],
    [<span><Spell>Rac</Spell> <Spell>Log</Spell></span>, "69,26%", "70,00%"],
];
const prova2: [React.ReactNode, string, string, string, string][] = [
    ["Auditoria", "83,42%", "80,80%", "80,00%", "50,00%"],
    [<Spell>Contab</Spell>, "80,16%", "65,94%", "61,10%", "55,50%"],
    [<Spell>DT</Spell>, "67,84%", "87,67%", "26,60%", "57,10%"],
    ["LT", "52,27%", "88,79%", "30,00%", "33,30%"],
    ["CI/LA", "70,00%", "82,83%", "33,30%", "33,30%"],
];
const execucao2 = [
    ["83,42%", "80,80%", "100,00%"],
    ["80,16%", "65,94%", "55,00%"],
    ["67,84%", "67,84%", "57,10%"],
    ["52,27%", "52,27%", "66,60%"],
    ["70,00%", "70,00%", "40,00%"],
];
const noteLines = [
    "testar técnica de feitura de prova: 1º analisar todas",
    "questões de prova classificando-as em “bola”",
    "como fácil, “triângulo” como médio e “quadrado”",
    "como difícil.\u00a0 Após, iniciar na ordem da fácil para a",
    "difícil.",
];

// ---- charts ----
const AXIS = "#b3b3b3";
const C_BLUE = "#004586";
const C_RED = "#ff420e";
const C_YEL = "#ffd320";
const C_GRN = "#579d1c";
const C_GRN2 = "#069a0e";
const LABEL = "#4a4a4a";

type BarSpec = {
    box: [number, number, number, number];
    view: [number, number, number, number];
    mid: number;
    groupY: number[];
    barH: number;
    w: [number, number][];
    colors: [string, string];
    labelX: number;
    labelY: number[];
    ticks: { x: number; y: number; t: string; rot?: boolean }[];
};

const cats = ["CI/LA", "LT", "DT", "Contab", "Auditoria"];

const BarChart: React.FC<{ c: BarSpec }> = ({ c }) => {
    const [x0, y0, x1, y1] = c.box;
    const [vx, vy, vw, vh] = c.view;
    return <FloatChart $x={vx} $y={vy} width={vw} height={vh} viewBox={`${vx} ${vy} ${vw} ${vh}`}>
        <rect x={x0} y={y0} width={x1 - x0} height={y1 - y0} fill="#fff" stroke={AXIS} strokeWidth="1.2" />
        <line x1={c.mid} x2={c.mid} y1={y0} y2={y1} stroke={AXIS} strokeWidth="1" />
        {c.groupY.map((y, i) => <g key={i}>
            <rect x={x0} y={y} width={c.w[i][0]} height={c.barH} fill={c.colors[0]} />
            <rect x={x0} y={y + c.barH} width={c.w[i][1]} height={c.barH} fill={c.colors[1]} />
            <line x1={x0 - 2} x2={x0} y1={y - 4} y2={y - 4} stroke={AXIS} />
            <text x={c.labelX} y={c.labelY[i] + 2} textAnchor="end" fontSize="5.6" fill={LABEL}>{cats[i]}</text>
        </g>)}
        {c.ticks.map((k, i) => k.rot
            ? <text key={i} x={k.x} y={k.y} textAnchor="end" fontSize="5.6" fill={LABEL} transform={`rotate(-50 ${k.x} ${k.y})`}>{k.t}</text>
            : <text key={i} x={k.x} y={k.y} textAnchor="middle" fontSize="5.6" fill={LABEL}>{k.t}</text>)}
    </FloatChart>;
};

const radarPt = (cx: number, cy: number, r: number, i: number, v: number): [number, number] => {
    const a = -Math.PI / 2 + i * 2 * Math.PI / 5;
    return [cx + r * v / 100 * Math.cos(a), cy + r * v / 100 * Math.sin(a)];
};
const ptsOf = (cx: number, cy: number, r: number, vals: number[]) =>
    vals.map((v, i) => radarPt(cx, cy, r, i, v).join(",")).join(" ");

type RadarSpec = {
    cx: number;
    cy: number;
    r: number;
    view: [number, number, number, number];
    series: { v: number[]; color: string; mark: "sq" | "ci" | "tr" }[];
    labels: { x: number; y: number; t: string }[];
    scale: { x: number; y: number; t: string }[];
};

const Marker: React.FC<{ x: number; y: number; kind: "sq" | "ci" | "tr"; color: string }> = ({ x, y, kind, color }) => {
    if (kind === "sq") return <rect x={x - 2.6} y={y - 2.6} width="5.2" height="5.2" fill={color} />;
    if (kind === "ci") return <circle cx={x} cy={y} r="3" fill={color} />;
    return <path d={`M${x - 3} ${y - 2.5}h6l-3 5z`} fill={color} />;
};

const RadarChart: React.FC<{ c: RadarSpec }> = ({ c }) => {
    const [vx, vy, vw, vh] = c.view;
    return <FloatChart $x={vx} $y={vy} width={vw} height={vh} viewBox={`${vx} ${vy} ${vw} ${vh}`}>
        <polygon points={ptsOf(c.cx, c.cy, c.r, [100, 100, 100, 100, 100])} fill="none" stroke={AXIS} strokeWidth="1.3" />
        <polygon points={ptsOf(c.cx, c.cy, c.r, [50, 50, 50, 50, 50])} fill="none" stroke={AXIS} strokeWidth="1" />
        {[0, 1, 2, 3, 4].map(i => {
            const [x, y] = radarPt(c.cx, c.cy, c.r, i, 100);
            const [mx, my] = radarPt(c.cx, c.cy, c.r, i, 50);
            return <g key={i}>
                <line x1={c.cx} y1={c.cy} x2={x} y2={y} stroke={AXIS} strokeWidth="1" />
                <rect x={x - 1.5} y={y - 1.5} width="3" height="3" fill={AXIS} />
                <rect x={mx - 1.5} y={my - 1.5} width="3" height="3" fill={AXIS} />
            </g>;
        })}
        <rect x={c.cx - 2} y={c.cy - 2} width="4" height="4" fill={AXIS} />
        {c.series.map((s, n) => <g key={n}>
            <polygon points={ptsOf(c.cx, c.cy, c.r, s.v)} fill="none" stroke={s.color} strokeWidth="1.3" />
            {s.v.map((v, i) => {
                const [x, y] = radarPt(c.cx, c.cy, c.r, i, v);
                return <Marker key={i} x={x} y={y} kind={s.mark} color={s.color} />;
            })}
        </g>)}
        {c.labels.map((l, i) => <text key={i} x={l.x} y={l.y + 2} textAnchor="middle" fontSize="5.8" fill={LABEL}>{l.t}</text>)}
        {c.scale.map((l, i) => <text key={i} x={l.x} y={l.y + 2} textAnchor="middle" fontSize="5.6" fill={LABEL}>{l.t}</text>)}
    </FloatChart>;
};

const barCharts: BarSpec[] = [
    {
        box: [372, 501.7, 412, 635], view: [345, 495, 80, 155], mid: 392,
        groupY: [506, 532.4, 559, 585.3, 612], barH: 8.67,
        w: [[13, 27.7], [13, 20.5], [22.8, 26.8], [22, 31.7], [19.6, 33]],
        colors: [C_YEL, C_BLUE], labelX: 368, labelY: [515, 541, 567.7, 594, 620.7],
        ticks: [{ x: 372, y: 649, t: "0,00%" }, { x: 392, y: 642, t: "50,00%" }, { x: 411.6, y: 649, t: "100,00%" }],
    },
    {
        box: [454.5, 502, 498.7, 638], view: [425, 495, 85, 155], mid: 476.8,
        groupY: [507, 533.7, 560.3, 587, 613.7], barH: 8.8,
        w: [[14.7, 14.7], [14.7, 13], [25, 11.6], [24, 26.8], [21.4, 34.8]],
        colors: [C_YEL, C_GRN], labelX: 450.5, labelY: [516, 542, 569, 596, 623],
        ticks: [{ x: 454.5, y: 646, t: "0,00%" }, { x: 476.8, y: 646, t: "50,00%" }, { x: 498.2, y: 646, t: "100,00%" }],
    },
    {
        box: [959, 503, 1004, 640], view: [930, 495, 90, 160], mid: 981.6,
        groupY: [507, 534.7, 562.3, 590, 617.3], barH: 9.1,
        w: [[9, 15.5], [14.7, 11.4], [12.6, 14.7], [12.2, 18], [22, 18]],
        colors: [C_BLUE, C_YEL], labelX: 956.7, labelY: [516, 543.7, 571, 599, 626.7],
        ticks: [{ x: 959, y: 650, t: "0,00%" }, { x: 981, y: 650, t: "100,00%" }, { x: 1003, y: 650, t: "200,00%" }],
    },
    {
        box: [1051, 503, 1090.6, 632], view: [1020, 495, 80, 165], mid: 1071,
        groupY: [507.3, 533, 558.7, 584.3, 610], barH: 8.6,
        w: [[8.2, 13.5], [13, 10.2], [11, 13], [11, 15.5], [19, 16.3]],
        colors: [C_GRN2, C_YEL], labelX: 1047, labelY: [516, 541, 567, 593, 618],
        ticks: [{ x: 1053, y: 637, t: "0,00%", rot: true }, { x: 1072, y: 637, t: "100,00%", rot: true }, { x: 1091, y: 637, t: "200,00%", rot: true }],
    },
];

const radars: RadarSpec[] = [
    {
        cx: 597.3, cy: 573.7, r: 59.4, view: [510, 495, 175, 145],
        series: [
            { v: [83.42, 70, 52.27, 67.84, 80.16], color: C_BLUE, mark: "sq" },
            { v: [80.8, 82.83, 88.79, 87.67, 65.94], color: C_RED, mark: "ci" },
            { v: [50, 33.3, 33.3, 57.1, 55.5], color: C_YEL, mark: "tr" },
        ],
        labels: [
            { x: 597, y: 503, t: "Auditoria" }, { x: 666, y: 553, t: "CI/LA" }, { x: 638, y: 630.7, t: "LT" },
            { x: 554.5, y: 630.7, t: "DT" }, { x: 525.4, y: 553, t: "Contab" },
        ],
        scale: [{ x: 611.6, y: 514, t: "100,00%" }, { x: 610, y: 544, t: "50,00%" }, { x: 609, y: 573, t: "0,00%" }],
    },
    {
        cx: 1198, cy: 582.3, r: 61.6, view: [1120, 500, 155, 150],
        series: [
            { v: [83.42, 70, 52.27, 67.84, 80.16], color: C_BLUE, mark: "sq" },
            { v: [80.8, 70, 52.27, 67.84, 65.94], color: C_RED, mark: "ci" },
            { v: [100, 40, 66.6, 57.1, 55], color: C_YEL, mark: "tr" },
        ],
        labels: [
            { x: 1197, y: 507.7, t: "1" }, { x: 1264, y: 560, t: "5" }, { x: 1239.6, y: 641.7, t: "4" },
            { x: 1156.7, y: 641.7, t: "3" }, { x: 1131.4, y: 560, t: "2" },
        ],
        scale: [{ x: 1213, y: 521, t: "100,00%" }, { x: 1212, y: 551, t: "50,00%" }, { x: 1210, y: 582, t: "0,00%" }],
    },
];

const tabs = [
    { t: "Macrocontrole de Revisões", w: 179, bg: "#ff0000", fg: "#fff" },
    { t: "RAI", w: 45, bg: "#99ccff", fg: "#222" },
    { t: "PA", w: 40, bg: "#22ff22", fg: "#222" },
    { t: "Comparativos Gráficos", w: 152, bg: "#ff8080", fg: "#222" },
    { t: "Curva de Esquecimento", w: 156, bg: "#ffff99", fg: "#222" },
    { t: "Análise Temporal", w: 124, bg: "#ff950e", fg: "#222" },
    { t: "Análise de Execução Tática", w: 177, bg: "#fff", fg: "#333", active: true },
    { t: "Diário de Positividade", w: 149, bg: "#2bff2b", fg: "#222" },
    { t: "Reta Final - AFRFB", w: 130, bg: "#f1f0ee", fg: "#555" },
];

const NavIcons = () => <svg width="118" height="20" viewBox="0 0 118 20">
    <g fill="#c9c7c2">
        <rect x="13" y="5" width="1.5" height="10" /><path d="M21 5v10l-6-5z" />
        <path d="M38 5v10l-6-5z" /><path d="M52 5v10l6-5z" />
        <path d="M70 5v10l6-5z" /><rect x="77" y="5" width="1.5" height="10" />
    </g>
    <path d="M100 5h4v3h3v4h-3v4h-4v-4h-3V8h3z" fill="#3c3c3c" />
</svg>;

const ZoomSlider = () => <svg width="144" height="20" viewBox="0 0 144 20">
    <path d="M10 10h7M128 10h8M132 6v8" stroke="#777" strokeWidth="2" />
    <path d="M24 10h98" stroke="#c5c3be" strokeWidth="2.4" />
    <path d="M72 5v10" stroke="#888" />
    <circle cx="38" cy="10" r="3.6" fill="#f1f0ee" stroke="#888" />
</svg>;

const BatteryIcon = () => <svg width="14" height="20" viewBox="0 0 14 20">
    <rect x="4.5" y="1" width="5" height="2" fill="#c9c6bf" />
    <rect x="1.5" y="3" width="11" height="16" rx="1" fill="none" stroke="#c9c6bf" strokeWidth="1.6" />
    <path d="M8 5L4 11h2.5L5.5 16 10 9.5H7.5z" fill="#c9c6bf" />
</svg>;

export default function App() {
    return <Screen>
        <GlobalStyle />
        <TopBar>
            <TopLeft>
                Atividades
                <TopApp>
                    <Ic s={18}>{icons.newDoc}</Ic>
                    LibreOffice Calc
                    <TopCaret />
                </TopApp>
            </TopLeft>
            <div>sex, 15:34</div>
            <TopTray>
                <Wifi size={16} />
                <Volume2 size={17} fill="currentColor" />
                <BatteryIcon />
                <Caret />
            </TopTray>
        </TopBar>
        <Body>
            <Launcher>
                {launcherIcons.map((l, i) => <LauncherItem key={i} $active={l.on} $dots={l.d}>
                    <Ic s={22}>{l.icon}</Ic>
                </LauncherItem>)}
                <AppGrid />
            </Launcher>
            <Window>
                <TitleBar>
                    Controle de Revisões.ods - LibreOffice Calc
                    <WindowButtons>
                        <WindowButton><svg width="8" height="8"><rect y="3" width="8" height="2" fill="#3c3a35" /></svg></WindowButton>
                        <WindowButton><svg width="8" height="8"><rect x=".5" y=".5" width="7" height="7" fill="none" stroke="#3c3a35" /></svg></WindowButton>
                        <WindowButton $close><svg width="8" height="8"><path d="M1 1l6 6M7 1L1 7" stroke="#3c1a08" strokeWidth="1.3" /></svg></WindowButton>
                    </WindowButtons>
                </TitleBar>
                <MenuBar>
                    {["Arquivo", "Editar", "Exibir", "Inserir", "Formatar", "Estilos", "Planilha", "Dados", "Ferramentas", "Janela", "Ajuda"].map(m => <span key={m}>{m}</span>)}
                    <DocClose>×</DocClose>
                </MenuBar>
                <Toolbar $h={39}>
                    <Grip />
                    <ToolItems items={toolbarOne} />
                </Toolbar>
                <Toolbar $h={40}>
                    <Grip />
                    <Combo $w={141} $ml={2}><ComboText $italic>Arial</ComboText><ComboDrop><Caret $size={5} $color="#222" /></ComboDrop></Combo>
                    <Combo $w={70} $ml={11}><ComboText>15</ComboText><ComboDrop><Caret $size={5} $color="#222" /></ComboDrop></Combo>
                    <ToolItems items={toolbarTwo} />
                </Toolbar>
                <Toolbar $h={32}>
                    <Combo $w={154} $ml={0} $h={26}><ComboText>F11</ComboText><ComboDrop><Caret $size={5} $color="#222" /></ComboDrop></Combo>
                    <FormulaSep $ml={6} />
                    <FormulaTool $w={28}><Ic s={18}>
                        <text x="12" y="20" textAnchor="middle" fontSize="21" fontStyle="italic" fontWeight="700" fontFamily="Liberation Serif" fill="#7c4d8a">fx</text>
                        <path d="M18 2l1 2 2 1-2 1-1 2-1-2-2-1 2-1zM9 1l1 1 1 1-1 1-1 1-1-1-1-1 1-1z" fill="#e8c820" />
                    </Ic></FormulaTool>
                    <FormulaTool $w={22}><Ic s={18}>
                        <text x="12" y="21" textAnchor="middle" fontSize="24" fontWeight="700" fontFamily="Liberation Sans" fill="#444">Σ</text>
                    </Ic></FormulaTool>
                    <FormulaTool $w={30}><Ic s={16}>
                        <path d="M3 6h18v4H3zM3 14h18v4H3z" fill="#2f6ca8" />
                    </Ic></FormulaTool>
                    <FormulaSep $ml={1} />
                    <FormulaInput>Simulado 1</FormulaInput>
                    <FormulaDrop><Caret $size={5} $color="#222" /></FormulaDrop>
                    <DeckCap />
                </Toolbar>
                <SheetRow>
                    <Sheet>
                        <Grid $cols={gridCols} $rows={gridRows}>
                            <RowHead $row={1} />
                            {letters.map((l, i) => <ColHead key={l} $col={i + 2} $sel={l === "F"}>{l}</ColHead>)}
                            <FillHeader />
                            {rowHeights.map((_, i) => <RowHead key={i} $row={gr(i + 1)} $sel={i + 1 === 11} $tight={i >= 17}>{i + 1}</RowHead>)}

                            <Cell $c={col("A")} $span={between("A", "L")} $r={gr(1)} $bg="#2323dc" $fg="#fff" $bold $size={12}>Análises de Aplicações Táticas</Cell>
                            <Cell $c={col("A")} $span={between("A", "L")} $r={gr(2)} $bg={SKY} $fg={PALE} $size={9.3}><span><Spell>AFRFB</Spell> 2014 – PROVA 1</span></Cell>

                            <Cell $c={col("A")} $r={gr(3)} $bg={BLUE} $fg={PALE} $size={9.3}>Disciplina</Cell>
                            <Cell $c={col("B")} $r={gr(3)} $bg={BLUE} $fg={PALE} $size={9.3}><span><Spell>Méd</Spell> 2014</span></Cell>
                            <Cell $c={col("C")} $r={gr(3)} $bg={BLUE} $fg={PALE} $size={9.3}><Spell>RAI</Spell></Cell>
                            <Cell $c={col("D")} $r={gr(3)} $bg={BLUE} />
                            <Cell $c={col("E")} $r={gr(3)} $bg={BLUE} $fg={PALE} $size={9.3}>Execução</Cell>
                            <Cell $c={col("F")} $span={between("F", "L")} $r={gr(3)} $bg={BLUE} $fg={PALE} $size={9.3}>Simulado 1<Mark /></Cell>
                            <Cell $c={col("M")} $span={2} $r={gr(3)} $bg={BLUE} />
                            <Cell $c={col("O")} $r={gr(3)} $bg={BLUE} $fg={PALE} $size={9.3}>Execução</Cell>
                            <Cell $c={col("P")} $span={between("P", "U")} $r={gr(3)} $bg={BLUE} $fg={PALE} $size={9.3}>Simulado 2<Mark /></Cell>
                            <Cell $c={col("V")} $span={between("V", "AA")} $r={gr(3)} $bg="#0000ff" />

                            {prova1.map((row, i) => <React.Fragment key={i}>
                                <Cell $c={col("A")} $r={gr(4 + i)}>{row[0]}</Cell>
                                <Cell $c={col("C")} $r={gr(4 + i)}>{row[1]}</Cell>
                                <Cell $c={col("E")} $r={gr(4 + i)}>{row[2]}</Cell>
                                <Cell $c={col("O")} $r={gr(4 + i)}>{row[2]}</Cell>
                            </React.Fragment>)}

                            <Cell $c={col("A")} $span={between("A", "N")} $r={gr(10)} $bg={SKY} $fg={PALE} $size={9.3}><span><Spell>AFRFB</Spell> 2014 – PROVA 2 - G1</span></Cell>

                            <Cell $c={col("A")} $r={gr(11)} $bg={BLUE} $fg={PALE} $size={9.3}>Disciplina</Cell>
                            <Cell $c={col("B")} $r={gr(11)} $bg={BLUE} $fg={PALE} $size={9.3}>Méd 2014</Cell>
                            <Cell $c={col("C")} $r={gr(11)} $bg="#ff0000" $fg={PALE} $size={9.3}>RAI</Cell>
                            <Cell $c={col("D")} $r={gr(11)} $bg="#33dd33" $fg="#14401a" $size={9.3}>Eu 2014</Cell>
                            <Cell $c={col("E")} $r={gr(11)} $bg="#ffff00" $fg="#222" $size={9.3}>Execução</Cell>
                            <SelectedBand $c={col("F")} $span={between("F", "L")} $r={gr(11)} $bg={BLUE} $fg={PALE} $size={9.3} $noClip>Simulado 1<Mark $inset={0} $top={0} /></SelectedBand>
                            <Cell $c={col("M")} $span={2} $r={gr(11)} $bg={BLUE} $fg={PALE} $size={9.3}>Dados de Execução</Cell>
                            <Cell $c={col("O")} $r={gr(11)} $bg={BLUE} $fg={PALE} $size={9.3}>Méd 2014</Cell>
                            <Cell $c={col("P")} $r={gr(11)} $bg="#ff0000" $fg={PALE} $size={9.3}>RAI</Cell>
                            <Cell $c={col("Q")} $r={gr(11)} $bg="#ffff00" $fg="#222" $size={9.3}>Execução 2</Cell>
                            <Cell $c={col("R")} $span={between("R", "U")} $r={gr(11)} $bg={BLUE} />
                            <Cell $c={col("V")} $span={between("V", "AA")} $r={gr(11)} $bg="#0000ff" />

                            {prova2.map((row, i) => <React.Fragment key={i}>
                                {row.map((v, c) => <Cell key={c} $c={col("A") + c} $r={gr(12 + i)}>{v}</Cell>)}
                            </React.Fragment>)}
                            {execucao2.map((row, i) => <React.Fragment key={i}>
                                {row.map((v, c) => <Cell key={c} $c={col("O") + c} $r={gr(12 + i)}>{v}</Cell>)}
                            </React.Fragment>)}

                            <Cell $c={col("M")} $span={2} $r={gr(12)} $bg={LIGHT}>Técnica de Chute</Cell>
                            <Cell $c={col("M")} $r={gr(13)} $size={7.6}>Efetividade</Cell>
                            <Cell $c={col("N")} $r={gr(13)}>24,2%</Cell>
                            <Cell $c={col("M")} $span={2} $r={gr(14)} $bg={LIGHT} $size={7.6}>Rendimento 2014 – 17</Cell>
                            <Cell $c={col("M")} $r={gr(15)} $size={7.6}>Efetividade</Cell>
                            <Cell $c={col("N")} $r={gr(15)} $fg="#5c9a1e" $bold>2,9%</Cell>
                            <NoteCell $c={col("M")} $span={2} $r={gr(16)} $bg="#ff0000" $fg="#300">Feito com 30 minutos a menos!</NoteCell>
                        </Grid>
                        {barCharts.map((c, i) => <BarChart key={i} c={c} />)}
                        {radars.map((c, i) => <RadarChart key={i} c={c} />)}
                        <TextNote>
                            <TextNoteBody>
                                {noteLines.map((l, i) => <NoteLine key={i} $last={i === noteLines.length - 1}>{l}</NoteLine>)}
                            </TextNoteBody>
                        </TextNote>
                    </Sheet>
                    <VScroll><VSplit /><VThumb /></VScroll>
                    <Deck><DeckGrip><Caret $size={3} $color="#fff" /></DeckGrip></Deck>
                </SheetRow>
                <HScroll><HThumb /><HGrip /></HScroll>
                <TabBar>
                    <TabNav><NavIcons /></TabNav>
                    {tabs.map(tb => <Tab key={tb.t} $w={tb.w} $bg={tb.bg} $fg={tb.fg} $active={tb.active}>{tb.t}</Tab>)}
                </TabBar>
                <StatusBar>
                    <StatusCell $pad={10}>Planilha 7 de 9</StatusCell>
                    <StatusCell />
                    <StatusCell>Padrão</StatusCell>
                    <StatusCell $center>Português (Brasil)</StatusCell>
                    <StatusCell />
                    <StatusCell $center><svg width="14" height="14"><rect x="1" y="3" width="7" height="8" fill="#999" /><path d="M11 2v10" stroke="#888" /></svg></StatusCell>
                    <StatusCell $center><svg width="12" height="14"><rect x="1" y="1" width="9" height="12" fill="none" stroke="#aaa" /><path d="M3 7l2 3 4-6" fill="none" stroke="#aaa" /></svg></StatusCell>
                    <StatusCell />
                    <StatusCell $center>Média: ; Soma: 0</StatusCell>
                    <StatusCell $center><ZoomSlider /></StatusCell>
                    <StatusCell $center>44%</StatusCell>
                </StatusBar>
            </Window>
        </Body>
    </Screen>;
}
